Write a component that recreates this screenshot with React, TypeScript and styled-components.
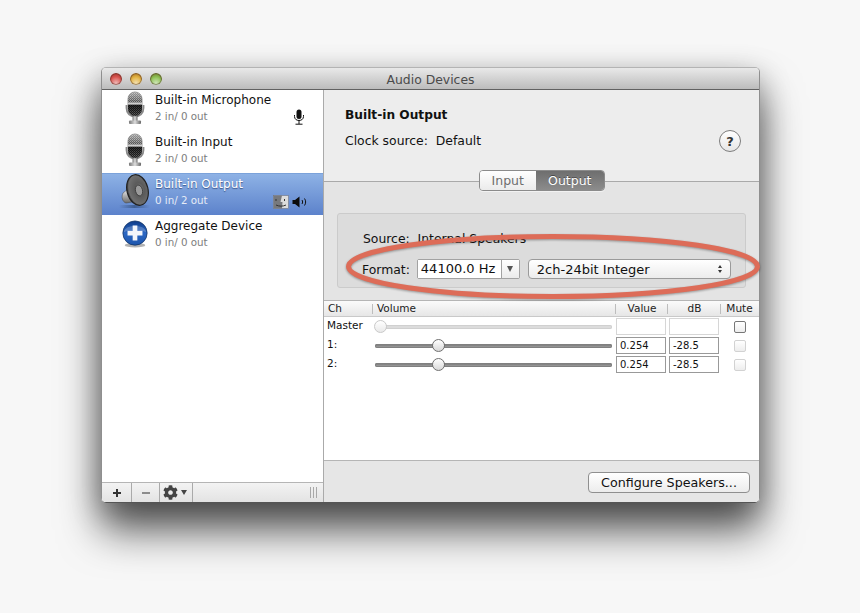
import styled, { createGlobalStyle } from 'styled-components';
import { FaCog } from 'react-icons/fa';

const GlobalStyle = createGlobalStyle`
  html, body {
    margin: 0;
    padding: 0;
    background: #f7f7f7;
    font-family: "DejaVu Sans", Verdana, sans-serif;
    font-size: 12.4px;
    color: #111;
  }
`;

const devices = [
  { name: 'Built-in Microphone', io: '2 in/ 0 out', icon: 'mic', badge: 'mic' },
  { name: 'Built-in Input', io: '2 in/ 0 out', icon: 'mic', badge: '' },
  { name: 'Built-in Output', io: '0 in/ 2 out', icon: 'speaker', badge: 'output', selected: true },
  { name: 'Aggregate Device', io: '0 in/ 0 out', icon: 'plus', badge: '' },
];

const channels = [
  { label: 'Master', thumb: 5, value: '', db: '', master: true },
  { label: '1:', thumb: 63, value: '0.254', db: '-28.5' },
  { label: '2:', thumb: 63, value: '0.254', db: '-28.5' },
];

const MicIcon = ({ id }: { id: string }) => (
  <svg width="26" height="34" viewBox="0 0 26 34">
    <defs>
      <pattern id={`${id}-mesh`} width="2" height="2" patternUnits="userSpaceOnUse">
        <rect width="2" height="2" fill="#2c2c2c" />
        <rect width="1" height="1" fill="#8b8b8b" />
        <rect x="1" y="1" width="1" height="1" fill="#6a6a6a" />
      </pattern>
      <linearGradient id={`${id}-shade`} x1="0" y1="0" x2="0" y2="1">
        <stop offset="0" stopColor="#fff" stopOpacity="0.55" />
        <stop offset="0.45" stopColor="#fff" stopOpacity="0.15" />
        <stop offset="0.55" stopColor="#000" stopOpacity="0.65" />
        <stop offset="1" stopColor="#000" stopOpacity="0.25" />
      </linearGradient>
      <linearGradient id={`${id}-metal`} x1="0" y1="0" x2="1" y2="0">
        <stop offset="0" stopColor="#777" />
        <stop offset="0.5" stopColor="#ddd" />
        <stop offset="1" stopColor="#666" />
      </linearGradient>
    </defs>
    <path d="M4.5 14v3c0 5.5 3.7 8.5 8.5 8.5s8.5-3 8.5-8.5v-3" fill="none" stroke="#8a8a8a" strokeWidth="1.8" />
    <rect x="10.5" y="25" width="5" height="5" fill={`url(#${id}-metal)`} />
    <rect x="7" y="29.5" width="12" height="3.5" rx="1" fill={`url(#${id}-metal)`} />
    <rect x="6" y="1" width="14" height="24" rx="7" fill={`url(#${id}-mesh)`} stroke="#555" strokeWidth="0.6" />
    <rect x="6" y="1" width="14" height="24" rx="7" fill={`url(#${id}-shade)`} />
    <rect x="5.5" y="11.5" width="15" height="2" fill="#cfcfcf" />
  </svg>
);

const SpeakerIcon = () => (
  <svg width="32" height="36" viewBox="0 0 32 36">
    <defs>
      <radialGradient id="cone" cx="0.6" cy="0.5" r="0.62">
        <stop offset="0" stopColor="#8a8a8a" />
        <stop offset="0.35" stopColor="#5a5a5a" />
        <stop offset="0.8" stopColor="#6f6f6f" />
        <stop offset="1" stopColor="#1f1f1f" />
      </radialGradient>
      <linearGradient id="can" x1="0" y1="0" x2="0" y2="1">
        <stop offset="0" stopColor="#f2f2f2" />
        <stop offset="1" stopColor="#6a6a6a" />
      </linearGradient>
      <linearGradient id="floor" x1="0" y1="0" x2="1" y2="0">
        <stop offset="0" stopColor="#33507f" stopOpacity="0" />
        <stop offset="0.5" stopColor="#33507f" stopOpacity="0.75" />
        <stop offset="1" stopColor="#33507f" stopOpacity="0" />
      </linearGradient>
    </defs>
    <rect x="0" y="31" width="31" height="3" fill="url(#floor)" />
    <path d="M9 15 L4 19 C2 23 3.500 28 7 29 L13 28 Z" fill="url(#can)" stroke="#444" strokeWidth="0.5" />
    <ellipse cx="18.5" cy="16" rx="10.5" ry="15.5" transform="rotate(-14 18.5 16)" fill="url(#cone)" stroke="#222" strokeWidth="1.2" />
    <ellipse cx="20" cy="16.500" rx="3.5" ry="5.5" transform="rotate(-14 20 16.500)" fill="#9a9a9a" stroke="#3a3a3a" strokeWidth="0.8" />
  </svg>
);

const PlusIcon = () => (
  <svg width="28" height="28" viewBox="0 0 30 30">
    <defs>
      <linearGradient id="plus-ball" x1="0" y1="0" x2="0" y2="1">
        <stop offset="0" stopColor="#0f3c88" />
        <stop offset="0.5" stopColor="#2c68c4" />
        <stop offset="1" stopColor="#1c54ab" />
      </linearGradient>
    </defs>
    <ellipse cx="15" cy="27" rx="11" ry="2.5" fill="#000" opacity="0.3" />
    <circle cx="15" cy="14" r="13" fill="url(#plus-ball)" stroke="#123163" strokeWidth="0.8" />
    <path d="M3 13 C5 4 25 4 27 13 C21 10 9 10 3 13 Z" fill="#fff" opacity="0.22" />
    <path d="M12.5 6h5v5.5H23v5h-5.5V22h-5v-5.5H7v-5h5.5Z" fill="#f4f6fb" />
  </svg>
);

const SmallMic = () => (
  <svg width="12" height="16" viewBox="0 0 12 16">
    <rect x="3.5" y="0.5" width="5" height="9.5" rx="2.5" fill="#111" />
    <path d="M1.5 6v1.5c0 2.500 2 4 4.500 4s4.500-1.500 4.500-4V6" fill="none" stroke="#111" />
    <path d="M6 11.5V15M2.5 15.2h7" stroke="#111" />
  </svg>
);

const FinderBadge = () => (
  <svg width="16" height="14" viewBox="0 0 16 14">
    <rect x="0.5" y="0.5" width="15" height="13" fill="#dcdcdc" stroke="#6e7480" strokeWidth="0.6" />
    <path d="M0.5 0.5H9L7.5 7h2l-.5 6.5H0.5Z" fill="#77797d" />
    <path d="M3 4v2M11.5 4v2M3 10c3 1.500 7 1.500 10 0" stroke="#333" fill="none" />
  </svg>
);

const SmallSpeaker = () => (
  <svg width="16" height="12" viewBox="0 0 16 12">
    <path d="M0.5 4H3L7.5 0.5v11L3 8H0.5Z" fill="#0c0c0c" />
    <path d="M10 4c.8 1.200.8 2.800 0 4M12.5 2.500c1.500 2 1.500 5 0 7" fill="none" stroke="#111" strokeWidth="1" />
  </svg>
);

const App = () => {
  return (
    <>
      <GlobalStyle />
      <Page>
        <Window>
          <TitleBar>
            <Lights>
              <Light $colour="#d9534e" />
              <Light $colour="#e2b23f" />
              <Light $colour="#8cc152" />
            </Lights>
            <WindowTitle>Audio Devices</WindowTitle>
          </TitleBar>
          <Body>
            <Sidebar>
              <DeviceList>
                {devices.map((d, i) => (
                  <DeviceRow key={d.name} $selected={!!d.selected}>
                    <DeviceIcon>
                      {d.icon === 'mic' && <MicIcon id={`mic${i}`} />}
                      {d.icon === 'speaker' && <SpeakerIcon />}
                      {d.icon === 'plus' && <PlusIcon />}
                    </DeviceIcon>
                    <DeviceText>
                      <DeviceName $selected={!!d.selected}>{d.name}</DeviceName>
                      <DeviceIo $selected={!!d.selected}>{d.io}</DeviceIo>
                    </DeviceText>
                    {d.badge && (
                      <DeviceBadges $right={d.badge === 'mic' ? 18 : 15}>
                        {d.badge === 'mic' && <SmallMic />}
                        {d.badge === 'output' && (
                          <>
                            <FinderBadge />
                            <SmallSpeaker />
                          </>
                        )}
                      </DeviceBadges>
                    )}
                  </DeviceRow>
                ))}
              </DeviceList>
              <SideFooter>
                <FootButton $width={30}>
                  <FootGlyph />
                </FootButton>
                <FootButton $width={28}>
                  <FootGlyph $minus />
                </FootButton>
                <GearButton>
                  <FaCog size={15} color="#444" />
                  <Caret />
                </GearButton>
                <Grip>
                  <i />
                  <i />
                  <i />
                </Grip>
              </SideFooter>
            </Sidebar>
            <Detail>
              <InfoPane>
                <InfoTitle>Built-in Output</InfoTitle>
                <ClockRow>
                  <span>Clock source:&nbsp; Default</span>
                  <HelpButton>?</HelpButton>
                </ClockRow>
              </InfoPane>
              <SettingsPane>
                <Segments>
                  <Segment $width={56}>Input</Segment>
                  <Segment $width={69} $active>
                    Output
                  </Segment>
                </Segments>
                <GroupBox>
                  <SourceRow>Source:&nbsp; Internal Speakers</SourceRow>
                  <FormatRow>
                    <span>Format:</span>
                    <Combo>
                      <ComboValue>44100.0 Hz</ComboValue>
                      <ComboArrow />
                    </Combo>
                    <PopUp>
                      <span>2ch-24bit Integer</span>
                      <Stepper>
                        <b />
                        <b />
                      </Stepper>
                    </PopUp>
                  </FormatRow>
                </GroupBox>
              </SettingsPane>
              <ChannelTable>
                <HeaderRow>
                  <HeaderCell>Ch</HeaderCell>
                  <HeaderCell>Volume</HeaderCell>
                  <HeaderCell $center>Value</HeaderCell>
                  <HeaderCell $center>dB</HeaderCell>
                  <HeaderCell $center>Mute</HeaderCell>
                </HeaderRow>
                {channels.map((c) => (
                  <ChannelRow key={c.label}>
                    <ChannelLabel>{c.label}</ChannelLabel>
                    <Slider $disabled={!!c.master}>
                      <Thumb $disabled={!!c.master} style={{ left: c.thumb }} />
                    </Slider>
                    <Field $disabled={!!c.master}>{c.value}</Field>
                    <Field $disabled={!!c.master}>{c.db}</Field>
                    <MuteBox $enabled={!!c.master} />
                  </ChannelRow>
                ))}
              </ChannelTable>
              <DetailFooter>
                <PushButton>Configure Speakers...</PushButton>
              </DetailFooter>
            </Detail>
          </Body>
        </Window>
        <Annotation width="430" height="80" viewBox="0 0 430 80">
          <ellipse cx="214" cy="38.5" rx="204.5" ry="30" fill="none" stroke="#dd6c58" strokeWidth="5" />
        </Annotation>
      </Page>
    </>
  );
};

export default App;

const Page = styled.div`
  position: relative;
  width: 860px;
  height: 613px;
  padding: 67px 0 0 101px;
  box-sizing: border-box;
  overflow: hidden;
`;

const Window = styled.div`
  width: 659px;
  height: 436px;
  display: flex;
  flex-direction: column;
  border: 1px solid #8f8f8f;
  border-top-color: #b4b4b4;
  border-bottom-color: #555;
  border-radius: 5px;
  box-sizing: border-box;
  overflow: hidden;
  box-shadow: 0 28px 42px rgba(0, 0, 0, 0.62), 0 8px 30px rgba(0, 0, 0, 0.28);
`;

const TitleBar = styled.div`
  position: relative;
  height: 22px;
  flex: none;
  display: flex;
  align-items: center;
  justify-content: center;
  padding-top: 1px;
  box-sizing: border-box;
  background: linear-gradient(#e9e9e9, #bcbcbc);
  border-bottom: 1px solid #616161;
`;

const Lights = styled.div`
  position: absolute;
  left: 8px;
  top: 5px;
  display: flex;
  gap: 8px;
`;

const Light = styled.span<{ $colour: string }>`
  width: 12px;
  height: 12px;
  border-radius: 50%;
  background: radial-gradient(circle at 50% 85%, #fff9 0, transparent 55%),
    linear-gradient(${(p) => p.$colour}, ${(p) => p.$colour});
  box-shadow: inset 0 0 0 1px rgba(70, 40, 30, 0.45), inset 0 2px 2px rgba(80, 20, 10, 0.35);
`;

const WindowTitle = styled.div`
  color: #4a4a4a;
  font-size: 12.4px;
`;

const Body = styled.div`
  flex: 1;
  min-height: 0;
  display: flex;
`;

const Sidebar = styled.div`
  width: 222px;
  flex: none;
  display: flex;
  flex-direction: column;
  background: #fff;
  border-right: 1px solid #aaa;
  box-sizing: border-box;
`;

const DeviceList = styled.div`
  flex: 1;
  margin-top: -1px;
`;

const DeviceRow = styled.div<{ $selected: boolean }>`
  height: 42px;
  display: flex;
  align-items: flex-start;
  box-sizing: border-box;
  ${(p) => p.$selected && 'background: linear-gradient(#8fb3e6, #5c82cb); box-shadow: inset 0 1px 0 #7ba2da;'}
`;

const DeviceIcon = styled.div`
  width: 53px;
  height: 38px;
  flex: none;
  display: flex;
  align-items: center;
  justify-content: center;
  padding-left: 12px;
  box-sizing: border-box;
  & > svg {
    display: block;
    flex: none;
  }
`;

const DeviceText = styled.div`
  flex: 1;
  padding-top: 3px;
`;

const DeviceName = styled.div<{ $selected: boolean }>`
  height: 16px;
  line-height: 16px;
  font-size: 12px;
  color: ${(p) => (p.$selected ? '#fff' : '#111')};
  ${(p) => p.$selected && 'text-shadow: 0 1px 1px rgba(30, 50, 100, 0.7);'}
`;

const DeviceIo = styled.div<{ $selected: boolean }>`
  height: 16px;
  line-height: 16px;
  font-size: 10.3px;
  color: ${(p) => (p.$selected ? '#e6ecf7' : '#7d7d7d')};
`;

const DeviceBadges = styled.div<{ $right: number }>`
  align-self: flex-end;
  display: flex;
  align-items: center;
  gap: 3px;
  margin: 0 ${(p) => p.$right}px 6px 0;
`;

const SideFooter = styled.div`
  height: 20px;
  flex: none;
  display: flex;
  background: linear-gradient(#f3f3f3, #e3e3e3);
  border-top: 1px solid #b5b5b5;
  box-sizing: border-box;
`;

const FootButton = styled.div<{ $width: number }>`
  width: ${(p) => p.$width}px;
  display: flex;
  align-items: center;
  justify-content: center;
  border-right: 1px solid #aaa;
  box-sizing: border-box;
`;

const GearButton = styled.div`
  width: 33px;
  display: flex;
  align-items: center;
  gap: 3px;
  padding-left: 3px;
  border-right: 1px solid #aaa;
  box-sizing: border-box;
`;

const FootGlyph = styled.span<{ $minus?: boolean }>`
  position: relative;
  width: 8px;
  height: 2px;
  background: ${(p) => (p.$minus ? '#8c8c8c' : '#333')};
  &::after {
    content: ${(p) => (p.$minus ? 'none' : "''")};
    position: absolute;
    left: 3px;
    top: -3px;
    width: 2px;
    height: 8px;
    background: #333;
  }
`;

const Caret = styled.span`
  width: 0;
  height: 0;
  border-left: 3.5px solid transparent;
  border-right: 3.5px solid transparent;
  border-top: 5px solid #444;
`;

const Grip = styled.div`
  margin-left: auto;
  margin-right: 6px;
  align-self: center;
  display: flex;
  gap: 2px;
  & > i {
    width: 1px;
    height: 11px;
    background: #a8a8a8;
  }
`;

const Detail = styled.div`
  flex: 1;
  display: flex;
  flex-direction: column;
  min-width: 0;
`;

const InfoPane = styled.div`
  height: 92px;
  flex: none;
  padding: 17px 17px 0 21px;
  box-sizing: border-box;
  background: #ededed;
  border-bottom: 1px solid #a9a9a9;
`;

const InfoTitle = styled.div`
  font-weight: 700;
  font-size: 12.2px;
  line-height: 16px;
`;

const ClockRow = styled.div`
  margin-top: 9px;
  display: flex;
  align-items: center;
  justify-content: space-between;
  height: 16px;
`;

const HelpButton = styled.div`
  width: 20px;
  height: 20px;
  border-radius: 50%;
  display: flex;
  align-items: center;
  justify-content: center;
  font-size: 13px;
  font-weight: 700;
  color: #333;
  background: linear-gradient(#fff, #e6e6e6);
  border: 1px solid #7d7d7d;
  margin: 2px 1px 0 0;
`;

const SettingsPane = styled.div`
  height: 118px;
  flex: none;
  padding: 0 13px;
  box-sizing: border-box;
  background: #e4e4e4;
`;

const Segments = styled.div`
  width: 126px;
  height: 21px;
  margin: -12px 0 0 142px;
  display: flex;
  position: relative;
  border: 1px solid #8b8b8b;
  border-radius: 4px;
  box-sizing: border-box;
  overflow: hidden;
  box-shadow: 0 1px 0 rgba(255, 255, 255, 0.5);
`;

const Segment = styled.div<{ $width: number; $active?: boolean }>`
  width: ${(p) => p.$width}px;
  display: flex;
  align-items: center;
  justify-content: center;
  font-size: 12.5px;
  color: ${(p) => (p.$active ? '#fff' : '#6e6e6e')};
  background: ${(p) => (p.$active ? 'linear-gradient(#6e6e6e, #8c8c8c)' : 'linear-gradient(#fff, #ebebeb)')};
  ${(p) => p.$active && 'text-shadow: 0 -1px 0 rgba(0, 0, 0, 0.4);'}
`;

const GroupBox = styled.div`
  width: 409px;
  height: 75px;
  margin-top: 22px;
  padding: 17px 15px 0 24px;
  box-sizing: border-box;
  background: #dcdcdc;
  border: 1px solid #cbcbcb;
  border-radius: 3px;
`;

const SourceRow = styled.div`
  line-height: 16px;
  margin-left: 1px;
  color: #111;
`;

const FormatRow = styled.div`
  display: flex;
  align-items: center;
  margin-top: 12px;
`;

const Combo = styled.div`
  margin-left: 7px;
  width: 103px;
  height: 20px;
  flex: none;
  display: flex;
  box-sizing: border-box;
  border: 1px solid #a2a2a2;
  border-radius: 2px;
`;

const ComboValue = styled.div`
  flex: 1;
  background: #fff;
  line-height: 17px;
  font-size: 13px;
  padding-left: 3px;
`;

const ComboArrow = styled.div`
  width: 17px;
  display: flex;
  align-items: center;
  justify-content: center;
  background: linear-gradient(#fff, #ebebeb);
  border-left: 1px solid #a2a2a2;
  &::after {
    content: '';
    border-left: 3.5px solid transparent;
    border-right: 3.5px solid transparent;
    border-top: 6px solid #555;
  }
`;

const PopUp = styled.div`
  margin-left: 8px;
  width: 203px;
  height: 20px;
  flex: none;
  display: flex;
  align-items: center;
  justify-content: space-between;
  padding: 0 8px;
  font-size: 13px;
  box-sizing: border-box;
  border: 1px solid #9a9a9a;
  border-radius: 4px;
  background: linear-gradient(#fff, #ececec);
`;

const Stepper = styled.div`
  display: flex;
  flex-direction: column;
  gap: 2px;
  & > b {
    width: 0;
    height: 0;
    border-left: 2.5px solid transparent;
    border-right: 2.5px solid transparent;
    border-bottom: 3px solid #333;
  }
  & > b + b {
    border-bottom: 0;
    border-top: 3px solid #333;
  }
`;

const ChannelTable = styled.div`
  flex: 1;
  min-height: 0;
  background: #fff;
`;

const HeaderRow = styled.div`
  height: 17px;
  display: grid;
  grid-template-columns: 49px 243px 52px 53px 37px;
  background: linear-gradient(#fbfbfb, #e6e6e6);
  border-top: 1px solid #b5b5b5;
  border-bottom: 1px solid #c9c9c9;
  box-sizing: border-box;
`;

const HeaderCell = styled.div<{ $center?: boolean }>`
  font-size: 10.5px;
  line-height: 15px;
  padding-left: ${(p) => (p.$center ? '0' : '4px')};
  text-align: ${(p) => (p.$center ? 'center' : 'left')};
  color: #222;
  &:not(:last-child) {
    background: linear-gradient(#bdbdbd, #bdbdbd) right center / 1px 10px no-repeat;
  }
`;

const ChannelRow = styled.div`
  height: 19px;
  display: grid;
  grid-template-columns: 51px 241px 53px 53px 36px;
  align-items: center;
`;

const ChannelLabel = styled.div`
  font-size: 10.5px;
  padding: 0 0 3px 3px;
`;

const Slider = styled.div<{ $disabled: boolean }>`
  position: relative;
  width: 237px;
  height: 4px;
  border-radius: 2px;
  background: ${(p) => (p.$disabled ? '#dcdcdc' : 'linear-gradient(#6f6f6f, #aaa)')};
  box-shadow: ${(p) => (p.$disabled ? 'inset 0 0 0 1px #d0d0d0' : 'inset 0 0 0 1px #808080')};
`;

const Thumb = styled.span<{ $disabled: boolean }>`
  position: absolute;
  top: -5px;
  width: 13px;
  height: 13px;
  margin-left: -6px;
  border-radius: 50%;
  box-sizing: border-box;
  background: linear-gradient(#fff, ${(p) => (p.$disabled ? '#e9e9e9' : '#d8d8d8')});
  border: 1px solid ${(p) => (p.$disabled ? '#c9c9c9' : '#707070')};
`;

const Field = styled.div<{ $disabled: boolean }>`
  width: 50px;
  height: 17px;
  box-sizing: border-box;
  font-size: 10px;
  line-height: 15px;
  padding-left: 3px;
  background: #fff;
  border: 1px solid ${(p) => (p.$disabled ? '#d6d6d6' : '#999')};
`;

const MuteBox = styled.div<{ $enabled: boolean }>`
  width: 12px;
  height: 12px;
  margin-left: 12px;
  box-sizing: border-box;
  border-radius: 2px;
  background: linear-gradient(#fff, #ededed);
  border: 1px solid ${(p) => (p.$enabled ? '#777' : '#d2d2d2')};
`;

const DetailFooter = styled.div`
  height: 42px;
  flex: none;
  display: flex;
  align-items: center;
  justify-content: flex-end;
  padding: 2px 9px 0 0;
  background: #e6e6e6;
  border-top: 1px solid #b5b5b5;
  box-sizing: border-box;
`;

const PushButton = styled.div`
  width: 162px;
  height: 21px;
  line-height: 19px;
  text-align: center;
  box-sizing: border-box;
  font-size: 12.7px;
  color: #111;
  background: linear-gradient(#fff, #ececec);
  border: 1px solid #8f8f8f;
  border-radius: 4px;
`;

const Annotation = styled.svg`
  position: absolute;
  left: 339px;
  top: 228px;
  filter: drop-shadow(0 1px 1px rgba(0, 0, 0, 0.35));
`;
